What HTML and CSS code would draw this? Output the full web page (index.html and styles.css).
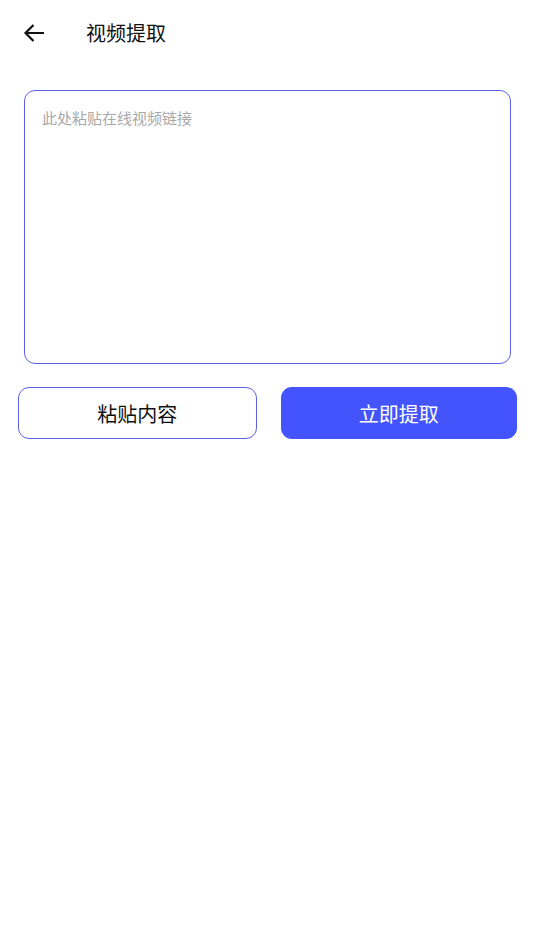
FILE: index.html
```html
<!DOCTYPE html>
<html lang="zh">
<head>
<meta charset="utf-8">
<link rel="stylesheet" href="styles.css">
</head>
<body>
<div class="header">
  <svg class="back" width="22" height="20" viewBox="0 0 22 20"><path d="M21 10H2.5M10.5 2L2.5 10L10.5 18" fill="none" stroke="#111" stroke-width="2.2" stroke-linecap="butt" stroke-linejoin="miter"/></svg>
  <div class="title">视频提取</div>
</div>
<div class="box">
  <div class="placeholder">此处粘贴在线视频链接</div>
</div>
<div class="actions">
  <div class="btn outline">粘贴内容</div>
  <div class="btn solid">立即提取</div>
</div>
</body>
</html>
```
FILE: styles.css
```css
html, body { margin: 0; padding: 0; background: #fff; }
body { font-family: "Noto Sans CJK SC", "Noto Sans", sans-serif; width: 535px; }
.header { height: 66px; display: flex; align-items: center; padding-left: 23px; }
.back { display: block; }
.title { margin-left: 41px; font-size: 20px; color: #111; line-height: 1; }
.box { margin: 24px 24px 0 24px; border: 1px solid #5d62e4; border-radius: 11px; padding: 17px; box-sizing: border-box; height: 274px; }
.placeholder { font-size: 15px; color: #a8a8a8; line-height: 20px; }
.actions { display: flex; gap: 24px; margin: 23px 18px 0 18px; }
.btn { flex: 1 1 0; height: 52px; box-sizing: border-box; border-radius: 11px; display: flex; align-items: center; justify-content: center; font-size: 20px; }
.outline { border: 1px solid #5d62e4; color: #111; }
.solid { background: #4454fd; color: #fff; }
```
